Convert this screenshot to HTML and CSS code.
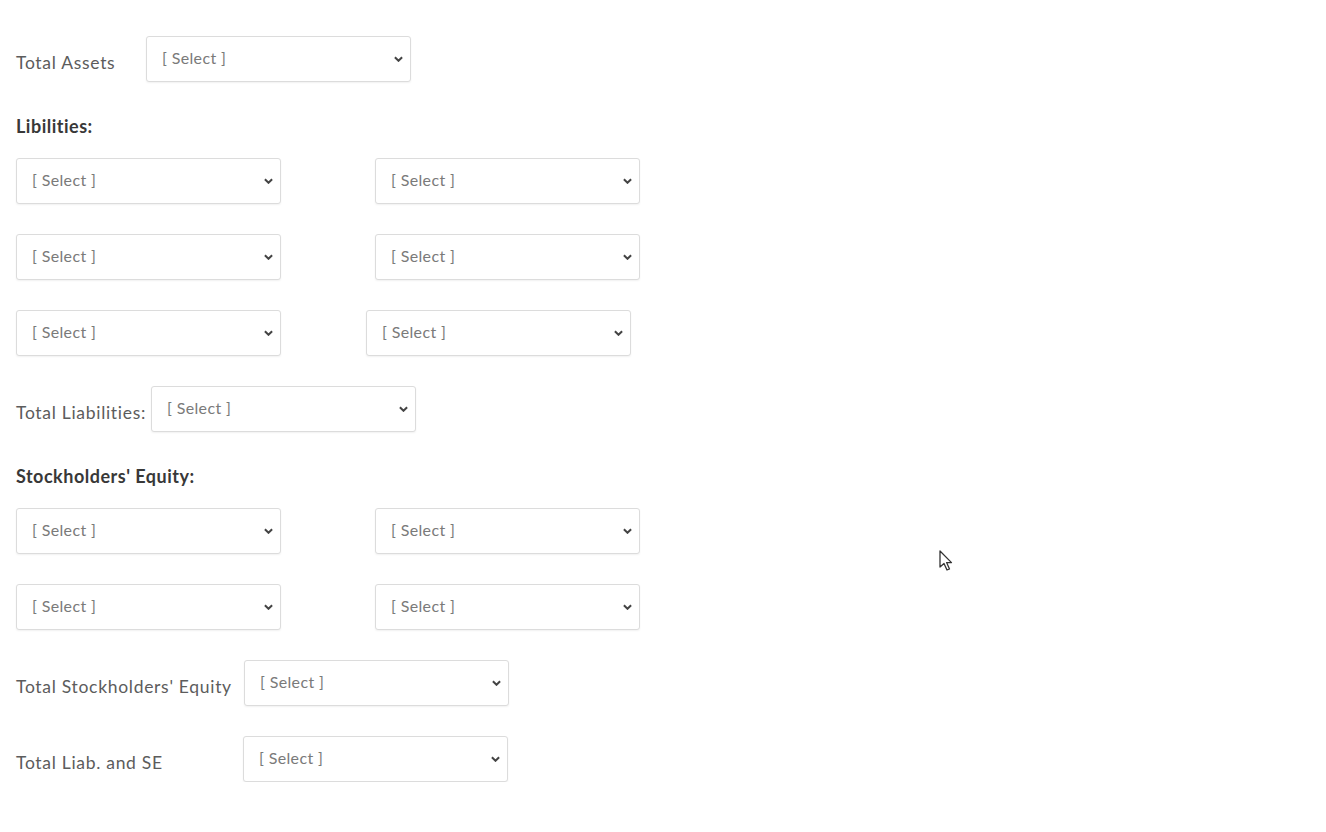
FILE: index.html
```html
<!DOCTYPE html>
<html>
<head>
<meta charset="utf-8">
<link rel="stylesheet" href="styles.css">
</head>
<body>
<div class="page">
  <div class="row total">
    <span class="label w-assets">Total Assets</span>
    <div class="select"><span>[ Select ]</span><svg class="chev" viewBox="0 0 10 6"><path d="M1 1 L5 5 L9 1" /></svg></div>
  </div>

  <div class="heading">Libilities:</div>
  <div class="grid">
    <div class="select"><span>[ Select ]</span><svg class="chev" viewBox="0 0 10 6"><path d="M1 1 L5 5 L9 1" /></svg></div>
    <div class="select"><span>[ Select ]</span><svg class="chev" viewBox="0 0 10 6"><path d="M1 1 L5 5 L9 1" /></svg></div>
    <div class="select"><span>[ Select ]</span><svg class="chev" viewBox="0 0 10 6"><path d="M1 1 L5 5 L9 1" /></svg></div>
    <div class="select"><span>[ Select ]</span><svg class="chev" viewBox="0 0 10 6"><path d="M1 1 L5 5 L9 1" /></svg></div>
    <div class="select"><span>[ Select ]</span><svg class="chev" viewBox="0 0 10 6"><path d="M1 1 L5 5 L9 1" /></svg></div>
    <div class="select shift"><span>[ Select ]</span><svg class="chev" viewBox="0 0 10 6"><path d="M1 1 L5 5 L9 1" /></svg></div>
  </div>

  <div class="row total">
    <span class="label w-liab">Total Liabilities:</span>
    <div class="select"><span>[ Select ]</span><svg class="chev" viewBox="0 0 10 6"><path d="M1 1 L5 5 L9 1" /></svg></div>
  </div>

  <div class="heading">Stockholders' Equity:</div>
  <div class="grid">
    <div class="select"><span>[ Select ]</span><svg class="chev" viewBox="0 0 10 6"><path d="M1 1 L5 5 L9 1" /></svg></div>
    <div class="select"><span>[ Select ]</span><svg class="chev" viewBox="0 0 10 6"><path d="M1 1 L5 5 L9 1" /></svg></div>
    <div class="select"><span>[ Select ]</span><svg class="chev" viewBox="0 0 10 6"><path d="M1 1 L5 5 L9 1" /></svg></div>
    <div class="select"><span>[ Select ]</span><svg class="chev" viewBox="0 0 10 6"><path d="M1 1 L5 5 L9 1" /></svg></div>
  </div>

  <div class="row total">
    <span class="label w-tse">Total Stockholders' Equity</span>
    <div class="select"><span>[ Select ]</span><svg class="chev" viewBox="0 0 10 6"><path d="M1 1 L5 5 L9 1" /></svg></div>
  </div>
  <div class="row total">
    <span class="label w-tlse">Total Liab. and SE</span>
    <div class="select"><span>[ Select ]</span><svg class="chev" viewBox="0 0 10 6"><path d="M1 1 L5 5 L9 1" /></svg></div>
  </div>
</div>
<svg class="cursor" viewBox="0 0 14 22" width="14" height="22"><path d="M1 1 L1 17 L5 13.5 L8 20 L10.5 19 L7.6 12.6 L12.5 12.6 Z" fill="#fff" stroke="#333" stroke-width="1.3" stroke-linejoin="round"/></svg>
</body>
</html>
```
FILE: styles.css
```css
html, body {
  margin: 0;
  padding: 0;
  background: #fff;
}
body {
  font-family: Lato, "Open Sans", "Liberation Sans", sans-serif;
  color: #555;
}
.page {
  padding: 36px 0 0 16px;
  display: flex;
  flex-direction: column;
  gap: 30px;
}
.row {
  display: flex;
  align-items: center;
  height: 46px;
}
.label {
  font-size: 17.5px;
  letter-spacing: 0.7px;
  color: #5c5c5c;
  padding-top: 7px;
  white-space: nowrap;
  flex: none;
}
.w-assets { width: 130px; }
.w-liab { width: 135px; }
.w-tse { width: 228px; }
.w-tlse { width: 227px; }
.heading {
  font-size: 18px;
  letter-spacing: 0.5px;
  font-weight: bold;
  color: #383838;
  height: 20px;
  line-height: 20px;
  margin: 4px 0 -8px 0;
}
.grid {
  display: grid;
  grid-template-columns: 265px 265px;
  column-gap: 94px;
  row-gap: 30px;
}
.select {
  box-sizing: border-box;
  width: 265px;
  height: 46px;
  border: 1px solid #dcdcdc;
  border-radius: 3px;
  box-shadow: 0 1px 2px rgba(0,0,0,0.06);
  background: #fff;
  display: flex;
  align-items: center;
  justify-content: space-between;
  padding: 0 7px 0 15px;
  font-size: 16px;
  letter-spacing: 0.35px;
  color: #7a7a7a;
}
.select span {
  margin-top: -3px;
}
.shift {
  margin-left: -9px;
}
.chev {
  width: 9px;
  height: 6px;
  fill: none;
  stroke: #444;
  stroke-width: 2.2;
}
.cursor {
  position: absolute;
  left: 939px;
  top: 550px;
}
```
